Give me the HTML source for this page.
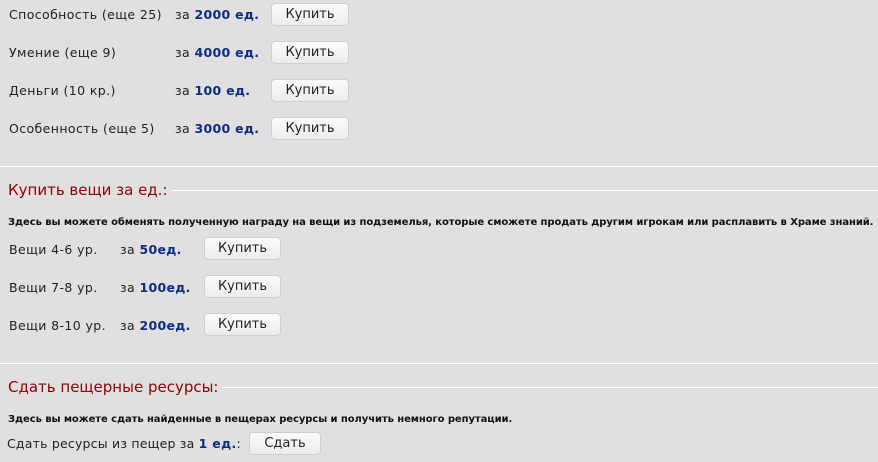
<!DOCTYPE html>
<html><head><meta charset="utf-8"><style>
body{margin:0;width:878px;height:462px;background:#e2dfe0;font-family:"DejaVu Sans","Liberation Sans",sans-serif;font-size:12.5px;color:#222;position:relative;overflow:hidden}
.a{position:absolute;white-space:nowrap;line-height:16px;letter-spacing:0.4px}
.p{color:#0a2e84;font-weight:bold;letter-spacing:0.3px}
.b{position:absolute;height:23px;border:1px solid #cfcfcf;border-radius:4px;background:linear-gradient(#fbfbfb,#ececec);box-sizing:border-box;text-align:center;line-height:21px;font-size:13px;color:#222}
.l{position:absolute;left:0;width:878px;height:1px;background:#fff}
.h{position:absolute;background:#e2dfe0;color:#8b0000;font-size:15px;padding:0 4px 0 8px;left:0;line-height:18px;white-space:nowrap}
.s{position:absolute;left:8px;font-size:10px;font-weight:bold;white-space:nowrap;color:#111;letter-spacing:-0.08px}
</style></head><body>
<div class="a" style="left:9px;top:7px">Способность (еще 25)</div><div class="a" style="left:175px;top:7px">за <span class="p">2000 ед.</span></div><div class="b" style="left:271px;top:3px;width:78px">Купить</div>
<div class="a" style="left:9px;top:45px">Умение (еще 9)</div><div class="a" style="left:175px;top:45px">за <span class="p">4000 ед.</span></div><div class="b" style="left:271px;top:41px;width:78px">Купить</div>
<div class="a" style="left:9px;top:83px">Деньги (10 кр.)</div><div class="a" style="left:175px;top:83px">за <span class="p">100 ед.</span></div><div class="b" style="left:271px;top:79px;width:78px">Купить</div>
<div class="a" style="left:9px;top:121px">Особенность (еще 5)</div><div class="a" style="left:175px;top:121px">за <span class="p">3000 ед.</span></div><div class="b" style="left:271px;top:117px;width:78px">Купить</div>

<div class="l" style="top:166px"></div><div class="l" style="top:190px"></div>
<div class="h" style="top:181px">Купить вещи за ед.:</div>
<div class="s" style="top:217px">Здесь вы можете обменять полученную награду на вещи из подземелья, которые сможете продать другим игрокам или расплавить в Храме знаний.</div>
<div class="a" style="left:9px;top:242px">Вещи 4-6 ур.</div><div class="a" style="left:120px;top:242px">за <span class="p">50ед.</span></div><div class="b" style="left:204px;top:237px;width:77px">Купить</div>
<div class="a" style="left:9px;top:280px">Вещи 7-8 ур.</div><div class="a" style="left:120px;top:280px">за <span class="p">100ед.</span></div><div class="b" style="left:204px;top:275px;width:77px">Купить</div>
<div class="a" style="left:9px;top:318px">Вещи 8-10 ур.</div><div class="a" style="left:120px;top:318px">за <span class="p">200ед.</span></div><div class="b" style="left:204px;top:313px;width:77px">Купить</div>

<div class="l" style="top:363px"></div><div class="l" style="top:387px"></div>
<div class="h" style="top:378px">Сдать пещерные ресурсы:</div>
<div class="s" style="top:414px">Здесь вы можете сдать найденные в пещерах ресурсы и получить немного репутации.</div>
<div class="a" style="left:7px;top:436px;letter-spacing:0.2px">Сдать ресурсы из пещер за <span class="p">1 ед.</span>:</div><div class="b" style="left:249px;top:432px;width:72px">Сдать</div>
</body></html>
